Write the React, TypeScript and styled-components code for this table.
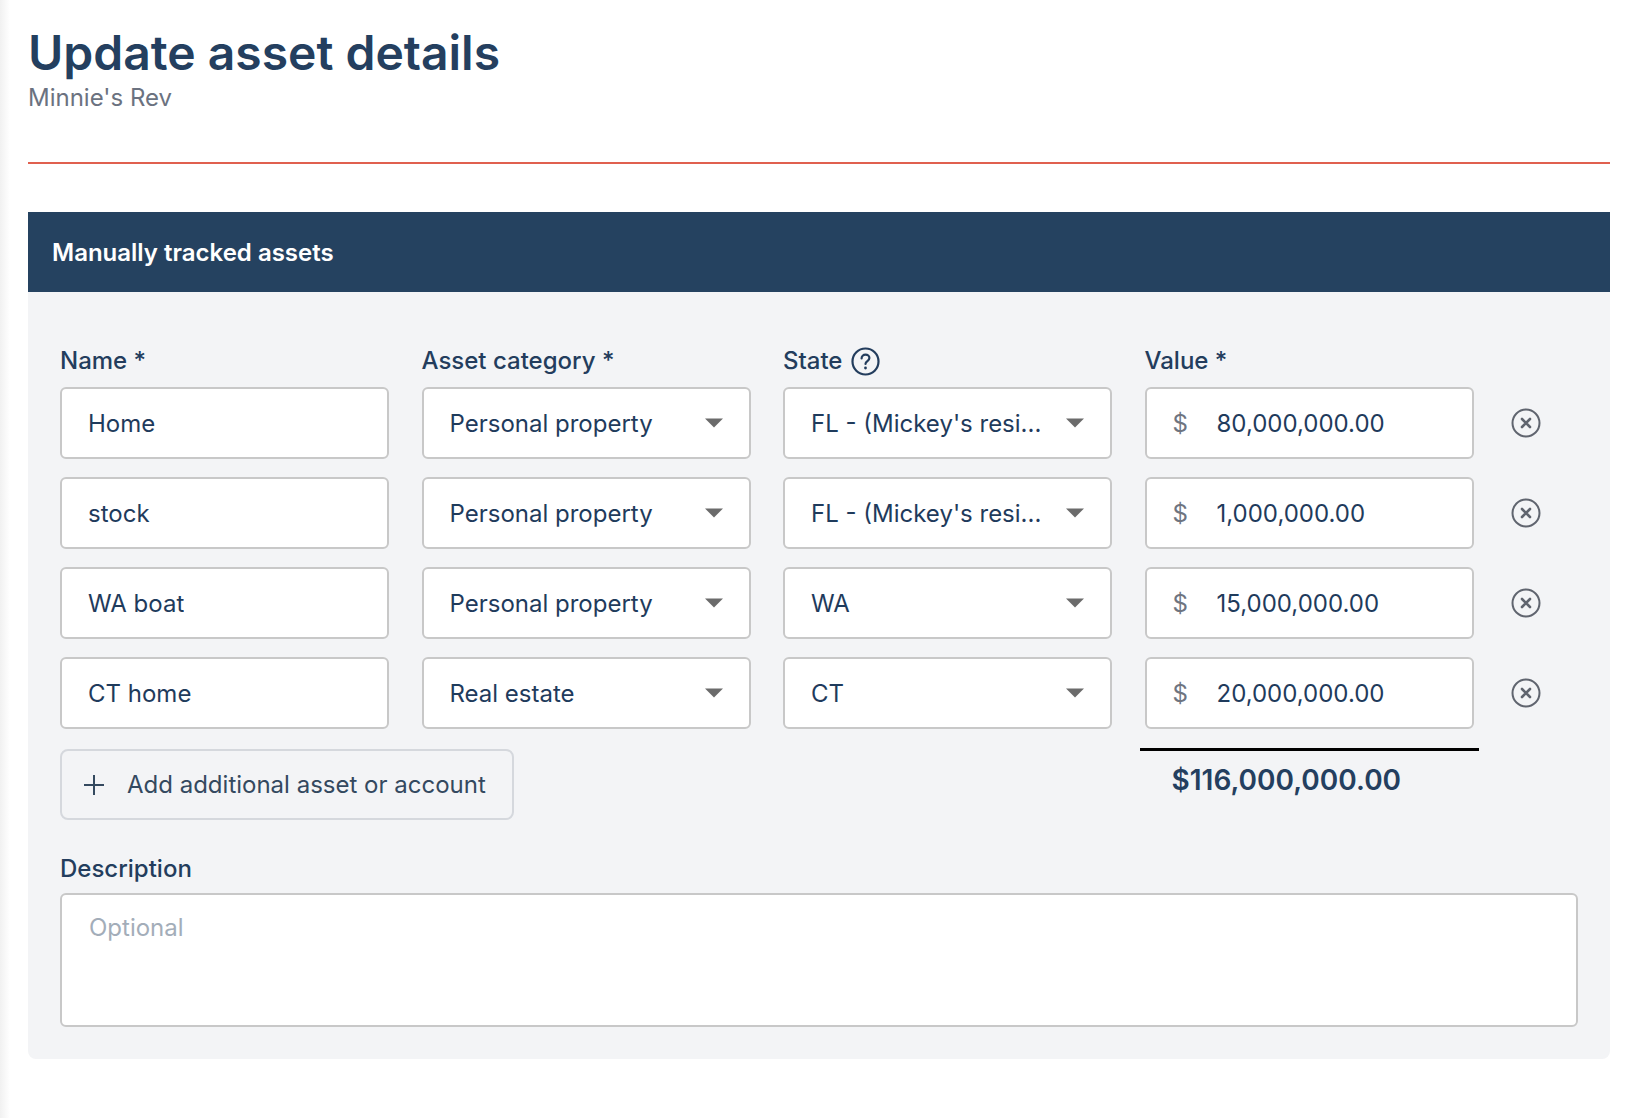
import React from "react";
import styled, { createGlobalStyle } from "styled-components";

const GlobalStyle = createGlobalStyle`
  * { box-sizing: border-box; }
  body {
    margin: 0;
    font-family: Inter, "Noto Sans", sans-serif;
    background: linear-gradient(to right, #f1f1f1 0, #ffffff 10px);
    color: #233d5d;
  }
`;

type Asset = {
  name: string;
  category: string;
  state: string;
  value: string;
};

const assets: Asset[] = [
  { name: "Home", category: "Personal property", state: "FL - (Mickey's resi...", value: "80,000,000.00" },
  { name: "stock", category: "Personal property", state: "FL - (Mickey's resi...", value: "1,000,000.00" },
  { name: "WA boat", category: "Personal property", state: "WA", value: "15,000,000.00" },
  { name: "CT home", category: "Real estate", state: "CT", value: "20,000,000.00" },
];

const Caret = () => (
  <svg width="18" height="10" viewBox="0 0 18 10">
    <path d="M0 0.5 H18 L9 9.5 Z" fill="#6b6b6b" />
  </svg>
);

const HelpIcon = () => (
  <svg width="29" height="29" viewBox="0 0 29 29" fill="none">
    <circle cx="14.5" cy="14.5" r="13" stroke="#233d5d" strokeWidth="2.2" />
    <path
      d="M10.6 11.4c0-2.2 1.7-3.8 3.9-3.8s3.9 1.5 3.9 3.5c0 2.9-3.9 3.1-3.9 5.9"
      stroke="#233d5d"
      strokeWidth="2.2"
      strokeLinecap="round"
    />
    <circle cx="14.5" cy="21" r="1.4" fill="#233d5d" />
  </svg>
);

const RemoveIcon = () => (
  <svg width="30" height="30" viewBox="0 0 30 30" fill="none">
    <circle cx="15" cy="15" r="13.5" stroke="#60656f" strokeWidth="2" />
    <path d="M11 11 L19 19 M19 11 L11 19" stroke="#60656f" strokeWidth="2.6" strokeLinecap="round" />
  </svg>
);

const PlusIcon = () => (
  <svg width="22" height="22" viewBox="0 0 22 22" fill="none">
    <path d="M11 1 V21 M1 11 H21" stroke="#34495f" strokeWidth="2" />
  </svg>
);

const App = () => {
  return (
    <>
      <GlobalStyle />
      <StPage>
        <StHeader>
          <StTitle>Update asset details</StTitle>
          <StSubtitle>Minnie's Rev</StSubtitle>
        </StHeader>

        <StSection>
          <StSectionBar>Manually tracked assets</StSectionBar>
          <StSectionBody>
            <StGrid>
              <StLabel>Name *</StLabel>
              <StLabel>Asset category *</StLabel>
              <StLabel>
                State <HelpIcon />
              </StLabel>
              <StLabel>Value *</StLabel>
            </StGrid>

            <StRows>
              {assets.map((asset) => (
                <StGrid key={asset.name}>
                  <StField>
                    <StFieldText>{asset.name}</StFieldText>
                  </StField>
                  <StField $select>
                    <StFieldText>{asset.category}</StFieldText>
                    <Caret />
                  </StField>
                  <StField $select>
                    <StFieldText>{asset.state}</StFieldText>
                    <Caret />
                  </StField>
                  <StField>
                    <StCurrency>$</StCurrency>
                    <StFieldText>{asset.value}</StFieldText>
                  </StField>
                  <StRemoveButton aria-label="Remove asset">
                    <RemoveIcon />
                  </StRemoveButton>
                </StGrid>
              ))}
            </StRows>

            <StFooterGrid>
              <StAddButton>
                <PlusIcon />
                <span>Add additional asset or account</span>
              </StAddButton>
              <StTotal>
                <StTotalValue>$116,000,000.00</StTotalValue>
              </StTotal>
            </StFooterGrid>

            <StDescriptionLabel>Description</StDescriptionLabel>
            <StTextarea placeholder="Optional" />
          </StSectionBody>
        </StSection>
      </StPage>
    </>
  );
};

export default App;

const StPage = styled.div`
  padding: 24px 18px 60px 28px;
`;

const StHeader = styled.header`
  border-bottom: 2px solid #e0604f;
  padding-bottom: 50px;
  margin-bottom: 48px;
`;

const StTitle = styled.h1`
  margin: 0;
  font-size: 48px;
  line-height: 58px;
  font-weight: 600;
  color: #243f5f;
`;

const StSubtitle = styled.div`
  margin-top: 2px;
  font-size: 24px;
  line-height: 28px;
  color: #6b7280;
`;

const StSection = styled.section`
  border-radius: 0 0 8px 8px;
  overflow: hidden;
`;

const StSectionBar = styled.div`
  height: 80px;
  background: #254260;
  color: #ffffff;
  display: flex;
  align-items: center;
  padding-left: 24px;
  font-size: 24px;
  font-weight: 600;
`;

const StSectionBody = styled.div`
  background: #f3f4f6;
  padding: 54px 32px 32px;
`;

const StGrid = styled.div`
  display: grid;
  grid-template-columns: repeat(4, 329px) 1fr;
  column-gap: 32.5px;
  align-items: center;
`;

const StLabel = styled.div`
  display: flex;
  align-items: center;
  gap: 9px;
  font-size: 24px;
  line-height: 30px;
  font-weight: 500;
  color: #233d5d;
  margin-bottom: 11px;
`;

const StRows = styled.div`
  display: flex;
  flex-direction: column;
  gap: 18px;
`;

const StField = styled.div<{ $select?: boolean }>`
  height: 72px;
  background: #ffffff;
  border: 2px solid #c8c8c8;
  border-radius: 6px;
  display: flex;
  align-items: center;
  justify-content: ${({ $select }) => ($select ? "space-between" : "flex-start")};
  padding: 0 26px;
  font-size: 24px;
  color: #1f3b5c;
`;

const StFieldText = styled.span`
  white-space: nowrap;
  overflow: hidden;
`;

const StCurrency = styled.span`
  color: #6e7480;
  width: 44px;
  flex-shrink: 0;
`;

const StRemoveButton = styled.button`
  justify-self: start;
  margin-left: 5px;
  padding: 0;
  border: none;
  background: none;
  display: flex;
  cursor: pointer;
`;

const StFooterGrid = styled.div`
  display: grid;
  grid-template-columns: repeat(4, 329px) 1fr;
  column-gap: 32.5px;
  align-items: start;
  margin-top: 20px;
`;

const StAddButton = styled.button`
  grid-column: 1 / span 2;
  justify-self: start;
  height: 71px;
  display: flex;
  align-items: center;
  gap: 22px;
  padding: 0 26px 0 21px;
  border: 2px solid #d5d8dd;
  border-radius: 8px;
  background: transparent;
  font-family: Inter, "Noto Sans", sans-serif;
  font-size: 24px;
  color: #34495f;
  cursor: pointer;
`;

const StTotal = styled.div`
  grid-column: 4;
  margin: -1px -5px 0;
  border-top: 3px solid #000000;
  padding: 12px 0 0 32px;
`;

const StTotalValue = styled.div`
  font-size: 28px;
  line-height: 34px;
  font-weight: 600;
  color: #243f5f;
`;

const StDescriptionLabel = styled(StLabel)`
  margin-top: 34px;
  margin-bottom: 9px;
`;

const StTextarea = styled.textarea`
  display: block;
  width: 100%;
  height: 134px;
  resize: none;
  background: #ffffff;
  border: 2px solid #c8c8c8;
  border-radius: 6px;
  padding: 18px 27px;
  font-family: Inter, "Noto Sans", sans-serif;
  font-size: 24px;
  line-height: 30px;
  color: #1f3b5c;

  &::placeholder {
    color: #a3adb9;
  }
`;
